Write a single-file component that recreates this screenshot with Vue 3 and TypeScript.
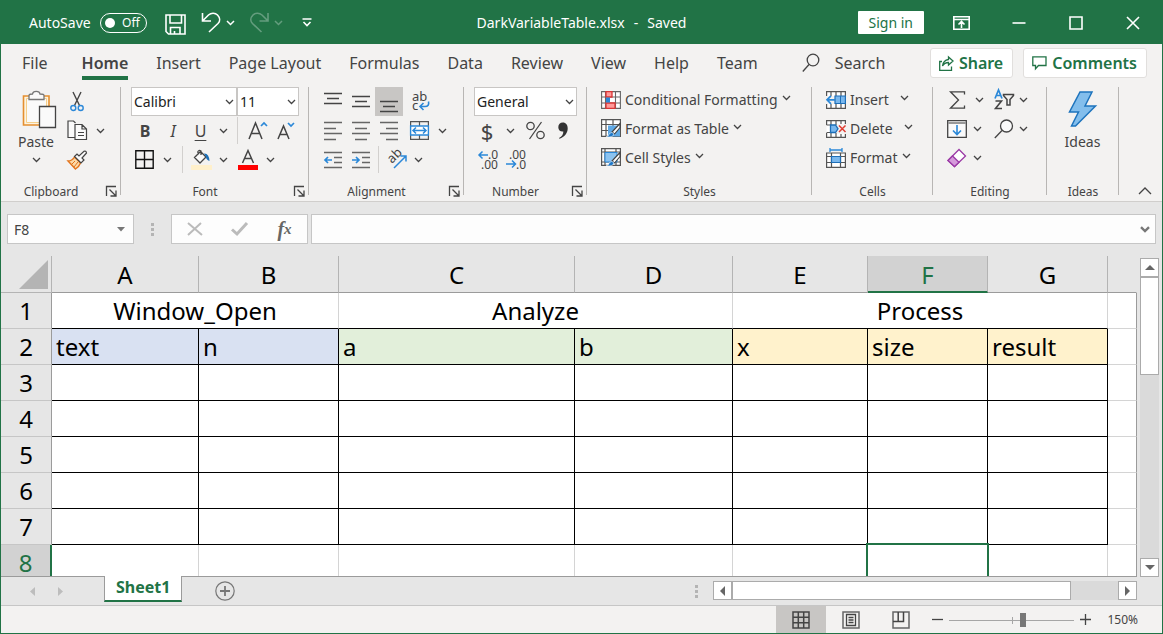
<script setup lang="ts">
import { h, ref } from 'vue'

interface Cell {
  text?: string
  span?: number
  tone?: 'blue' | 'green' | 'yellow'
}

const Chevron = () =>
  h('svg', { class: 'chevron', viewBox: '0 0 9 6', width: 9, height: 6, 'aria-hidden': 'true' }, [
    h('path', { d: 'M1 1l3.500 3.500L8 1' }),
  ])

const Launcher = () =>
  h('svg', { class: 'launcher-icon', viewBox: '0 0 11 11', width: 11, height: 11, 'aria-hidden': 'true' }, [
    h('path', { d: 'M.5 10V.5H10M3.500 3.500l6 6M10 4.500v5.500H4.500' }),
  ])

const menuTabs = ['File', 'Home', 'Insert', 'Page Layout', 'Formulas', 'Data', 'Review', 'View', 'Help', 'Team']
const activeTab = ref('Home')

const columns = [
  { name: 'A', width: 147 },
  { name: 'B', width: 140 },
  { name: 'C', width: 236 },
  { name: 'D', width: 158 },
  { name: 'E', width: 135 },
  { name: 'F', width: 120 },
  { name: 'G', width: 120 },
]

const groupHeads: Cell[] = [
  { text: 'Window_Open', span: 2 },
  { text: 'Analyze', span: 2 },
  { text: 'Process', span: 3 },
]

const fieldHeads: Cell[] = [
  { text: 'text', tone: 'blue' },
  { text: 'n', tone: 'blue' },
  { text: 'a', tone: 'green' },
  { text: 'b', tone: 'green' },
  { text: 'x', tone: 'yellow' },
  { text: 'size', tone: 'yellow' },
  { text: 'result', tone: 'yellow' },
]

const emptyRows = [3, 4, 5, 6, 7]
const autoSave = ref(false)
const cellName = ref('F8')
const formula = ref('')
const zoomPosition = ref(59)
</script>

<template>
  <div class="window">
    <header class="titlebar">
      <div class="quick">
        <label class="autosave">
          <span>AutoSave</span>
          <span class="switch">
            <input v-model="autoSave" type="checkbox" />
            <span class="switch-text">Off</span>
          </span>
        </label>
        <button class="q-save" aria-label="Save">
          <svg width="21" height="21" viewBox="0 0 21 21" class="line-white">
            <path d="M1 1H20V20H3.500L1 17.500zM5 1V9H16.500V1M5.500 20V13.500H15V20M9.500 20V17" />
          </svg>
        </button>
        <button class="q-undo" aria-label="Undo">
          <svg width="20" height="21" viewBox="0 0 20 21" class="line-white">
            <path d="M1.500 1V9H10M2 8.500L7.500 3C10 .8 14 .4 16.500 3S19.500 9 17 11.500L8 20" />
          </svg>
        </button>
        <button class="q-chev" aria-label="Undo list"><Chevron /></button>
        <button class="q-redo dim" aria-label="Redo">
          <svg width="20" height="21" viewBox="0 0 20 21" class="line-white">
            <path d="M18 1V9H9.500M17.500 8.500L12 3C9.500 .8 5.500 .4 3 3S0 9 2.500 11.500L11.500 20" />
          </svg>
        </button>
        <button class="q-chev dim" aria-label="Redo list"><Chevron /></button>
        <button class="q-more" aria-label="Customize toolbar">
          <svg width="10" height="9" viewBox="0 0 10 9" class="line-white"><path d="M.5 1H9.500M1.500 4L5 7.500L8.500 4" /></svg>
        </button>
      </div>
      <div class="doc-title"><span>DarkVariableTable.xlsx</span><span>-</span><span>Saved</span></div>
      <div class="window-tools">
        <button class="sign-in">Sign in</button>
        <button class="win-btn" aria-label="Ribbon display options">
          <svg width="17" height="14" viewBox="0 0 17 14" class="line-white">
            <path d="M.8 .8H16.200V13.200H.8zM.8 3.500H16.200M8.500 12V6M5.500 8.500L8.500 5.500L11.500 8.500" />
          </svg>
        </button>
        <button class="win-btn" aria-label="Minimize">
          <svg width="14" height="14" viewBox="0 0 14 14" class="line-white"><path d="M.5 7H13.500" /></svg>
        </button>
        <button class="win-btn" aria-label="Maximize">
          <svg width="14" height="14" viewBox="0 0 14 14" class="line-white"><path d="M1 1H13V13H1z" /></svg>
        </button>
        <button class="win-btn" aria-label="Close">
          <svg width="14" height="14" viewBox="0 0 14 14" class="line-white"><path d="M1 1L13 13M13 1L1 13" /></svg>
        </button>
      </div>
    </header>

    <nav class="menu">
      <button
        v-for="tab in menuTabs"
        :key="tab"
        class="menu-tab"
        :class="{ active: tab === activeTab, file: tab === 'File' }"
        @click="activeTab = tab"
      >{{ tab }}</button>
      <button class="search">
        <svg width="18" height="20" viewBox="0 0 18 20" class="line-dark"><circle cx="11" cy="7" r="5.800" /><path d="M7 11.500L.8 18.500" /></svg>
        <span>Search</span>
      </button>
      <div class="menu-actions">
        <button class="pill">
          <svg width="15" height="15" viewBox="0 0 15 15" class="line-green">
            <path d="M3 5.500H.7V14.300H12.500V10.500M9.500 1L14 5L9.500 9V6.500C6.500 6.500 5 7.500 3.500 10C4 6.500 6 4 9.500 3.500z" />
          </svg>
          <span>Share</span>
        </button>
        <button class="pill comments">
          <svg width="15" height="14" viewBox="0 0 15 14" class="line-green"><path d="M.8 .8H14V9.500H6.500L3.500 12.800V9.500H.8z" /></svg>
          <span>Comments</span>
        </button>
      </div>
    </nav>

    <section class="ribbon">
      <div class="group clipboard">
        <div class="group-body columns">
          <button class="big paste">
            <svg width="35" height="39" viewBox="0 0 35 39">
              <path d="M1.500 6H27V35H1.500z" fill="#fdf3df" stroke="#e58f2f" stroke-width="1.600" />
              <path d="M4.500 8.500H24.500V32.500H4.500z" fill="#fafafa" stroke="#f5cf8a" />
              <path d="M7 9.500V5.500C7 4 9 4 10.500 4C11 .5 17.500 .5 18 4C20 4 22 4 22 5.500V9.500z" fill="#fafafa" stroke="#777" stroke-width="1.300" />
              <path d="M17.500 16.500H33.500V37.500H17.500z" fill="#fafafa" stroke="#444" stroke-width="1.300" />
            </svg>
            <span>Paste</span>
            <Chevron />
          </button>
          <div class="stack">
            <div class="row">
              <button class="w28" aria-label="Cut">
                <svg width="14" height="21" viewBox="0 0 14 21" fill="none" stroke="#444" stroke-width="1.400">
                  <path d="M3 1L9.500 14.500M11 1L4.500 14.500" /><circle cx="3.300" cy="17" r="2.500" stroke="#2b88d8" /><circle cx="10.700" cy="17" r="2.500" stroke="#2b88d8" />
                </svg>
              </button>
            </div>
            <div class="row">
              <button class="w28" aria-label="Copy">
                <svg width="21" height="21" viewBox="0 0 21 21" fill="#fafafa" stroke="#444" stroke-width="1.200">
                  <path d="M8 17.500H1V1H6.500L8.500 3" /><path d="M8 4.500H15L19.500 9V19.500H8zM15 4.500V9H19.500M11 12.500H17M11 15.500H17" />
                </svg>
              </button>
              <button class="w18" aria-label="Copy options"><Chevron /></button>
            </div>
            <div class="row">
              <button class="w28" aria-label="Format Painter">
                <svg width="21" height="20" viewBox="0 0 21 20">
                  <path d="M1 11Q5 11 7.500 7L13.500 13Q12 17 8.500 19z" fill="#fbd9a8" stroke="#e3741c" stroke-width="1.400" />
                  <path d="M5 14L8 11M7 17L11 12" stroke="#e3741c" />
                  <path d="M7.500 6.500L10 4L12 6L17 1.200Q19 .5 19.500 3L15 8L17 10L14 13z" fill="#fafafa" stroke="#444" stroke-width="1.200" />
                </svg>
              </button>
            </div>
          </div>
        </div>
        <div class="group-foot"><span>Clipboard</span><button aria-label="Clipboard settings"><Launcher /></button></div>
      </div>

      <div class="group font">
        <div class="group-body">
          <div class="row">
            <span class="combo font-name">
              <select aria-label="Font"><option>Calibri</option></select><Chevron />
            </span>
            <span class="combo font-size">
              <select aria-label="Font size"><option>11</option></select><Chevron />
            </span>
          </div>
          <div class="row">
            <button class="w28 glyph bold">B</button>
            <button class="w28 glyph italic">I</button>
            <button class="w27 glyph underline">U</button>
            <button class="w18" aria-label="Underline options"><Chevron /></button>
            <i class="divider" />
            <button class="w30" aria-label="Increase font size">
              <svg width="20" height="20" viewBox="0 0 20 20" class="line-dark"><path d="M1 18L7.500 2L14 18M3.300 12.500H11.700" stroke-width="1.500" /><path d="M13 5L16 2L19 5" stroke="#2b88d8" stroke-width="1.700" /></svg>
            </button>
            <button class="w26" aria-label="Decrease font size">
              <svg width="18" height="20" viewBox="0 0 18 20" class="line-dark"><path d="M1 18L6.500 5L12 18M3 13.500H10" stroke-width="1.500" /><path d="M11 2L14 5L17 2" stroke="#2b88d8" stroke-width="1.700" /></svg>
            </button>
          </div>
          <div class="row">
            <button class="w26" aria-label="Borders">
              <svg width="19" height="19" viewBox="0 0 19 19" fill="none" stroke="#111" stroke-width="1.400"><path d="M.8 .8H18.200V18.200H.8zM9.500 1V18M1 9.500H18" /></svg>
            </button>
            <button class="w20" aria-label="Border options"><Chevron /></button>
            <i class="divider" />
            <button class="w26" aria-label="Fill color">
              <svg width="21" height="21" viewBox="0 0 21 21">
                <rect y="16" width="21" height="5" fill="#fff0cb" /><path d="M3.500 8.500L9.500 2.500L15 8L9 14zM7.500 5.500L6.800 3Q7.500 .5 10 2V6" fill="#fafafa" stroke="#444" stroke-width="1.300" /><path d="M13 4.500Q18 4 18.500 12Q15 10.500 15 8z" fill="#1a6fb8" />
              </svg>
            </button>
            <button class="w18" aria-label="Fill options"><Chevron /></button>
            <button class="w32" aria-label="Font color">
              <svg width="20" height="21" viewBox="0 0 20 21" class="line-dark"><path d="M4.500 14L10 1.500L15.500 14M6.500 9.500H13.500" stroke-width="1.500" /><rect y="16" width="20" height="5" fill="#f00" stroke="none" /></svg>
            </button>
            <button class="w12" aria-label="Font color options"><Chevron /></button>
          </div>
        </div>
        <div class="group-foot"><span>Font</span><button aria-label="Font settings"><Launcher /></button></div>
      </div>

      <div class="group alignment">
        <div class="group-body">
          <div class="row">
            <button class="w28" aria-label="Top align"><svg width="18" height="20" viewBox="0 0 18 20" class="line-dark"><path d="M0 1.500H18M3 6.500H15M0 11.500H18" /></svg></button>
            <button class="w28" aria-label="Middle align"><svg width="18" height="20" viewBox="0 0 18 20" class="line-dark"><path d="M0 4.500H18M3 9.500H15M0 14.500H18" /></svg></button>
            <button class="w28 pressed" aria-label="Bottom align"><svg width="18" height="20" viewBox="0 0 18 20" class="line-dark"><path d="M0 9.500H18M3 14.500H15M0 19.500H18" /></svg></button>
            <button class="w36" aria-label="Wrap text">
              <svg width="18" height="22" viewBox="0 0 18 22"><text x="0" y="10" class="icon-text">ab</text><text x="0" y="19" class="icon-text">c</text><path d="M16.500 10.500Q17.500 15.500 13 15.500H8M11.500 12L8 15.500L11.500 19" fill="none" stroke="#2b88d8" stroke-width="1.600" /></svg>
            </button>
          </div>
          <div class="row">
            <button class="w28" aria-label="Align left"><svg width="18" height="18" viewBox="0 0 18 18" class="line-mid"><path d="M0 .5H18M0 6.500H12M0 11.500H18M0 17.500H12" /></svg></button>
            <button class="w28" aria-label="Center"><svg width="18" height="18" viewBox="0 0 18 18" class="line-mid"><path d="M0 .5H18M3 6.500H15M0 11.500H18M3 17.500H15" /></svg></button>
            <button class="w28" aria-label="Align right"><svg width="18" height="18" viewBox="0 0 18 18" class="line-mid"><path d="M0 .5H18M6 6.500H18M0 11.500H18M6 17.500H18" /></svg></button>
            <button class="w32" aria-label="Merge and center">
              <svg width="19" height="19" viewBox="0 0 19 19" fill="none" stroke="#555" stroke-width="1.200"><path d="M.6 .6H18.400V18.400H.6zM9.500 .6V5M9.500 14V18.400" /><path d="M.6 5H18.400V14H.6z" fill="#fff" stroke="#2b88d8" stroke-width="1.400" /><path d="M3 9.500H16M6 6.500L3 9.500L6 12.500M13 6.500L16 9.500L13 12.500" stroke="#2b88d8" stroke-width="1.500" /></svg>
            </button>
            <button class="w14" aria-label="Merge options"><Chevron /></button>
          </div>
          <div class="row">
            <button class="w28" aria-label="Decrease indent"><svg width="18" height="18" viewBox="0 0 18 18" class="line-mid"><path d="M0 1.500H18M10 6.500H18M10 11.500H18M0 16.500H18" /><path d="M8 9H1M4 6L1 9L4 12" stroke="#2b88d8" stroke-width="1.700" /></svg></button>
            <button class="w28" aria-label="Increase indent"><svg width="18" height="18" viewBox="0 0 18 18" class="line-mid"><path d="M0 1.500H18M10 6.500H18M10 11.500H18M0 16.500H18" /><path d="M0 9H7M4 6L7 9L4 12" stroke="#2b88d8" stroke-width="1.700" /></svg></button>
            <i class="divider narrow" />
            <button class="w30" aria-label="Orientation">
              <svg width="22" height="21" viewBox="0 0 22 21"><text class="icon-text" transform="translate(6 15) rotate(-45)">ab</text><path d="M8 19L20 7M14.500 7H20V12.500" fill="none" stroke="#2b88d8" stroke-width="1.500" /></svg>
            </button>
            <button class="w12" aria-label="Orientation options"><Chevron /></button>
          </div>
        </div>
        <div class="group-foot"><span>Alignment</span><button aria-label="Alignment settings"><Launcher /></button></div>
      </div>

      <div class="group number">
        <div class="group-body">
          <div class="row">
            <span class="combo number-format">
              <select aria-label="Number format"><option>General</option></select><Chevron />
            </span>
          </div>
          <div class="row">
            <button class="w26 symbol">$</button>
            <button class="w20" aria-label="Currency options"><Chevron /></button>
            <button class="w30" aria-label="Percent style">
              <svg width="19" height="19" viewBox="0 0 19 19" class="line-dark"><circle cx="4.500" cy="5" r="3.700" /><circle cx="14.500" cy="14" r="3.700" /><path d="M15.500 1L3.500 18" /></svg>
            </button>
            <button class="w26" aria-label="Comma style">
              <svg width="10" height="17" viewBox="0 0 10 17"><path d="M1 16C4 14.500 5.500 12 5.300 9.500C2.500 10 .3 8 .3 5.200C.3 2.500 2.200 .6 4.800 .6C8 .6 9.700 3 9.700 6.500C9.700 11 6.500 15 1.500 16.700z" fill="#333" /></svg>
            </button>
          </div>
          <div class="row">
            <button class="w28" aria-label="Increase decimal">
              <svg width="20" height="21" viewBox="0 0 20 21"><text x="10" y="10" class="digit-text">.0</text><text x="3" y="20" class="digit-text">.00</text><path d="M10 6H1M4.500 2.500L1 6L4.500 9.500" fill="none" stroke="#2b88d8" stroke-width="1.500" /></svg>
            </button>
            <button class="w28" aria-label="Decrease decimal">
              <svg width="20" height="21" viewBox="0 0 20 21"><text x="3" y="10" class="digit-text">.00</text><text x="10" y="20" class="digit-text">.0</text><path d="M0 15H9.500M6 11.500L9.500 15L6 18.500" fill="none" stroke="#2b88d8" stroke-width="1.500" /></svg>
            </button>
          </div>
        </div>
        <div class="group-foot"><span>Number</span><button aria-label="Number settings"><Launcher /></button></div>
      </div>

      <div class="group styles">
        <div class="group-body raised">
          <button class="row labelled">
            <svg width="20" height="18" viewBox="0 0 20 18" fill="#fff" stroke="#666"><path d="M.6 .6H19.400V17.400H.6zM4.500 .6V17.400M14.500 .6V17.400M.6 6H19.400M.6 12H19.400" stroke-width="1.100" /><path d="M5 .6H11V6H5zM5 12H14V17.400H5z" fill="#ff9a9a" stroke="#d93636" stroke-width="1.300" /><path d="M5 6.500H9V11.500H5z" fill="#2b88d8" stroke="none" /></svg>
            <span>Conditional Formatting</span><Chevron />
          </button>
          <button class="row labelled">
            <svg width="20" height="19" viewBox="0 0 20 19"><path d="M.6 .6H19.400V17.400H.6zM5 .6V17.400M12 .6V17.400M.6 5.500H19.400M.6 11.500H19.400" fill="#fff" stroke="#555" stroke-width="1.200" /><path d="M7 6.500H19V17.500H7z" fill="#5ea9e6" /><path d="M11 13L19 4.500V8.500L13.500 15z" fill="#fff" stroke="#444" stroke-width="1.100" /><path d="M5 18Q8 17 8.500 14.500Q11 12 13 15Q12.500 18.500 5 18z" fill="#1e78c8" stroke="#fff" stroke-width=".6" /></svg>
            <span>Format as Table</span><Chevron />
          </button>
          <button class="row labelled">
            <svg width="20" height="19" viewBox="0 0 20 19"><path d="M.6 .6H19.400V17.400H.6zM4 .6V17.400M15 .6V17.400M.6 4H19.400M.6 14H19.400" fill="#fff" stroke="#555" stroke-width="1.200" /><path d="M4 4.500H16V14H4z" fill="#8cc3f0" stroke="#2b88d8" /><path d="M11 13L19 4.500V8.500L13.500 15z" fill="#fff" stroke="#444" stroke-width="1.100" /><path d="M5 18Q8 17 8.500 14.500Q11 12 13 15Q12.500 18.500 5 18z" fill="#1e78c8" stroke="#fff" stroke-width=".6" /></svg>
            <span>Cell Styles</span><Chevron />
          </button>
        </div>
        <div class="group-foot plain"><span>Styles</span></div>
      </div>

      <div class="group cells">
        <div class="group-body raised">
          <button class="row labelled wide">
            <svg width="20" height="18" viewBox="0 0 20 18"><path d="M.6 5V.6H19.400V5M.6 13V17.400H19.400V13M5 .6V5M10 .6V5M15 .6V5M5 13V17.400M10 13V17.400M15 13V17.400" fill="#fff" stroke="#555" stroke-width="1.200" /><path d="M9 5H19.400V12.500H9z" fill="#7ab8ee" stroke="#1e6fb8" stroke-width="1.200" /><path d="M14.500 5V12.500" stroke="#1e6fb8" /><path d="M9 8.800H1M5 4.800L1 8.800L5 12.800" fill="none" stroke="#2b88d8" stroke-width="1.700" /></svg>
            <span>Insert</span><Chevron />
          </button>
          <button class="row labelled wide">
            <svg width="20" height="18" viewBox="0 0 20 18"><path d="M.6 5V.6H19.400V4M.6 13V17.400H19.400V14M.6 5H5V12.500H.6M5 .6V5M10 .6V5M15 .6V4M5 13V17.400M10 13V17.400M15 14V17.400" fill="#fff" stroke="#555" stroke-width="1.200" /><path d="M4.500 5H9.500L12 8.800L9.500 12.500H4.500z" fill="#7ab8ee" stroke="#1e6fb8" stroke-width="1.300" /><path d="M13 5.500L19.500 12M19.500 5.500L13 12" stroke="#e03c31" stroke-width="1.500" /></svg>
            <span>Delete</span><Chevron />
          </button>
          <button class="row labelled">
            <svg width="20" height="20" viewBox="0 0 20 20"><path d="M.6 5H19.400V19.400H.6zM5.500 5V19.400M14.500 5V19.400M.6 8.500H19.400M.6 14.500H19.400" fill="#fff" stroke="#555" stroke-width="1.200" /><path d="M5.500 8.500H14.500V14.500H5.500z" fill="#7ab8ee" stroke="#1e6fb8" stroke-width="1.200" /><path d="M4 2H16M4 0V4M16 0V4" stroke="#2b88d8" stroke-width="1.300" /></svg>
            <span>Format</span><Chevron />
          </button>
        </div>
        <div class="group-foot plain"><span>Cells</span></div>
      </div>

      <div class="group editing">
        <div class="group-body raised">
          <div class="row">
            <button class="w28" aria-label="Sum"><svg width="17" height="18" viewBox="0 0 17 18" class="line-dark"><path d="M15.500 3.500V.8H1.500L9.500 9L1.500 17.200H15.500V14.500" /></svg></button>
            <button class="w16" aria-label="Sum options"><Chevron /></button>
            <button class="w24 spaced" aria-label="Sort and filter">
              <svg width="21" height="21" viewBox="0 0 21 21" class="line-dark"><path d="M1 9.500L4.500 1L8 9.500M2.300 6.500H6.700" stroke="#2b88d8" stroke-width="1.700" /><path d="M1.500 12H7.500L1.500 19.500H8" stroke-width="1.600" /><path d="M9.500 5.500H19.500V6.500L16 10.500V16H13V10.500L9.500 6.500z" stroke-width="1.500" /></svg>
            </button>
            <button class="w14" aria-label="Sort options"><Chevron /></button>
          </div>
          <div class="row">
            <button class="w28" aria-label="Fill"><svg width="20" height="18" viewBox="0 0 20 18"><path d="M.7 .7H19.300V17.300H.7z" fill="#fafafa" stroke="#444" stroke-width="1.300" /><path d="M1 3H19" stroke="#999" stroke-width="2" /><path d="M10 5V14.500M6 10.500L10 14.500L14 10.500" fill="none" stroke="#2b88d8" stroke-width="1.600" /></svg></button>
            <button class="w12" aria-label="Fill options"><Chevron /></button>
            <button class="w24 spaced far" aria-label="Find and select"><svg width="20" height="20" viewBox="0 0 20 20" class="line-dark"><circle cx="12.500" cy="7" r="6" fill="#fafafa" /><path d="M8 11.500L.8 19" /></svg></button>
            <button class="w14" aria-label="Find options"><Chevron /></button>
          </div>
          <div class="row">
            <button class="w28" aria-label="Clear"><svg width="20" height="20" viewBox="0 0 20 20" stroke="#9b3aa6" stroke-width="1.300"><path d="M1 12.500L12 1.500L18.500 8L7.500 18.500z" fill="#fff" /><path d="M1 12.500L5.500 8L12 14.200L7.500 18.500z" fill="#d59bdb" /></svg></button>
            <button class="w12" aria-label="Clear options"><Chevron /></button>
          </div>
        </div>
        <div class="group-foot plain"><span>Editing</span></div>
      </div>

      <div class="group ideas">
        <div class="group-body">
          <button class="big">
            <svg width="29" height="39" viewBox="0 0 29 39"><path d="M12 2H24L17 16H27.500L7.500 36H3.500L10.500 22H1.500z" fill="#83beec" stroke="#1e74bd" stroke-width="1.500" /></svg>
            <span>Ideas</span>
          </button>
        </div>
        <div class="group-foot plain"><span>Ideas</span></div>
      </div>
      <button class="collapse" aria-label="Collapse ribbon">
        <svg width="14" height="8" viewBox="0 0 14 8" class="line-dark"><path d="M1 7L7 1L13 7" /></svg>
      </button>
    </section>

    <section class="formula-bar">
      <div class="name-box">
        <input v-model="cellName" type="text" aria-label="Name box" />
        <button aria-label="Name list"><svg width="8" height="5" viewBox="0 0 8 5"><path d="M0 0H8L4 4.500z" fill="#777" /></svg></button>
      </div>
      <span class="grip" />
      <div class="entry-tools">
        <button aria-label="Cancel"><svg width="16" height="14" viewBox="0 0 16 14" fill="none" stroke="#bbb" stroke-width="2"><path d="M1 1L15 13M14 1L1 13" /></svg></button>
        <button aria-label="Enter"><svg width="17" height="14" viewBox="0 0 17 14" fill="none" stroke="#bbb" stroke-width="3"><path d="M1 7.500L6 12L16 1" /></svg></button>
        <button class="fx" aria-label="Insert function"><span>f</span><small>x</small></button>
      </div>
      <div class="formula-input">
        <input v-model="formula" type="text" aria-label="Formula" />
        <button aria-label="Expand formula bar"><svg width="10" height="7" viewBox="0 0 10 7" fill="none" stroke="#777" stroke-width="2.400"><path d="M1 1.200L5 5L9 1.200" /></svg></button>
      </div>
    </section>

    <main class="sheet-area">
      <div class="grid-clip">
        <table class="grid">
          <colgroup>
            <col class="col-head" />
            <col v-for="c in columns" :key="c.name" :style="{ width: c.width + 'px' }" />
            <col />
          </colgroup>
          <thead>
            <tr>
              <th class="corner"><svg width="29" height="29" viewBox="0 0 29 29"><path d="M29 0V29H0z" fill="#b4b4b4" /></svg></th>
              <th v-for="c in columns" :key="c.name" scope="col" :class="{ current: c.name === 'F' }">{{ c.name }}</th>
              <th class="rest" />
            </tr>
          </thead>
          <tbody>
            <tr>
              <th scope="row">1</th>
              <td v-for="g in groupHeads" :key="g.text" :colspan="g.span" class="group-head">{{ g.text }}</td>
              <td />
            </tr>
            <tr class="ruled">
              <th scope="row">2</th>
              <td v-for="f in fieldHeads" :key="f.text" :class="f.tone">{{ f.text }}</td>
              <td class="outside" />
            </tr>
            <tr v-for="r in emptyRows" :key="r" class="ruled">
              <th scope="row">{{ r }}</th>
              <td v-for="c in columns" :key="c.name" />
              <td class="outside" />
            </tr>
            <tr>
              <th scope="row" class="current">8</th>
              <td v-for="c in columns" :key="c.name" :class="{ selected: c.name === 'F' }" />
              <td />
            </tr>
          </tbody>
        </table>
      </div>
      <div class="v-scroll">
        <button aria-label="Scroll up"><svg width="10" height="5" viewBox="0 0 10 5"><path d="M0 5L5 0L10 5z" fill="#666" /></svg></button>
        <span class="v-thumb" />
        <button class="down" aria-label="Scroll down"><svg width="10" height="5" viewBox="0 0 10 5"><path d="M0 0H10L5 5z" fill="#666" /></svg></button>
      </div>
    </main>

    <section class="sheet-tabs">
      <div class="sheet-left">
        <button class="step" aria-label="Previous sheet"><svg width="5" height="9" viewBox="0 0 5 9"><path d="M5 0V9L0 4.500z" fill="#bdbdbd" /></svg></button>
        <button class="step" aria-label="Next sheet"><svg width="5" height="9" viewBox="0 0 5 9"><path d="M0 0V9L5 4.500z" fill="#bdbdbd" /></svg></button>
        <button class="sheet-tab">Sheet1</button>
        <button class="add" aria-label="New sheet"><svg width="20" height="20" viewBox="0 0 20 20" fill="none" stroke="#777"><circle cx="10" cy="10" r="9.200" stroke-width="1.200" /><path d="M10 5V15M5 10H15" stroke-width="1.800" /></svg></button>
      </div>
      <span class="grip tall" />
      <div class="h-scroll">
        <button aria-label="Scroll left"><svg width="5" height="10" viewBox="0 0 5 10"><path d="M5 0V10L0 5z" fill="#666" /></svg></button>
        <span class="h-thumb" />
        <button class="right" aria-label="Scroll right"><svg width="5" height="10" viewBox="0 0 5 10"><path d="M0 0V10L5 5z" fill="#666" /></svg></button>
      </div>
    </section>

    <footer class="status">
      <button class="view on" aria-label="Normal view"><svg width="18" height="18" viewBox="0 0 18 18" fill="none" stroke="#444" stroke-width="1.500"><path d="M1 1H17V17H1zM6.300 1V17M11.700 1V17M1 6.300H17M1 11.700H17" /></svg></button>
      <button class="view" aria-label="Page layout view"><svg width="18" height="18" viewBox="0 0 18 18" fill="none" stroke="#666" stroke-width="1.500"><path d="M1 1H17V17H1z" /><path d="M4.500 3.500H13.500V14.500H4.500zM6.500 6.500H11.500M6.500 9H11.500M6.500 11.500H11.500" stroke="#444" stroke-width="1.300" /></svg></button>
      <button class="view" aria-label="Page break view"><svg width="18" height="18" viewBox="0 0 18 18" fill="none" stroke="#666" stroke-width="1.500"><path d="M1 1H17V17H1z" /><path d="M1 10.500H11.500V1M6.200 1V10.500" stroke="#444" /></svg></button>
      <button class="zoom-step" aria-label="Zoom out"><svg width="11" height="11" viewBox="0 0 11 11" class="line-dark"><path d="M0 5.500H11" /></svg></button>
      <span class="zoom-track"><input v-model.number="zoomPosition" type="range" min="0" max="100" aria-label="Zoom" /></span>
      <button class="zoom-step" aria-label="Zoom in"><svg width="11" height="11" viewBox="0 0 11 11" class="line-dark"><path d="M0 5.500H11M5.500 0V11" /></svg></button>
      <button class="zoom-value">150%</button>
    </footer>
  </div>
</template>

<style>
html,
body {
  margin: 0;
  background: #e6e6e6;
}
</style>

<style scoped>
* {
  box-sizing: border-box;
}
.window {
  display: flex;
  flex-direction: column;
  height: 100vh;
  border: 1px solid #217346;
  overflow: hidden;
  background: #f3f2f1;
  color: #444;
  font: 14px/20px "Noto Sans", "Open Sans", sans-serif;
}
button,
input,
select {
  font: inherit;
  color: inherit;
}
button {
  display: inline-flex;
  align-items: center;
  justify-content: center;
  flex: none;
  padding: 0;
  border: 0;
  background: none;
}
svg {
  display: block;
  flex: none;
  overflow: visible;
}
.line-white,
.line-dark,
.line-mid,
.line-green,
.chevron,
.launcher-icon {
  fill: none;
  stroke: #444;
  stroke-width: 1.3;
}
.line-white {
  stroke: #fff;
  stroke-width: 1.6;
}
.line-mid {
  stroke: #666;
}
.line-green {
  stroke: #217346;
}

/* Title bar */
.titlebar {
  display: grid;
  grid-template-columns: 1fr auto 1fr;
  align-items: center;
  flex: none;
  height: 43px;
  background: #217346;
  color: #fff;
}
.quick {
  display: flex;
  align-items: center;
  padding-left: 28px;
}
.titlebar .chevron {
  stroke: #fff;
  stroke-width: 1.5;
}
.autosave {
  display: flex;
  align-items: center;
  gap: 9px;
}
.switch {
  position: relative;
  display: block;
  width: 47px;
  height: 20px;
}
.switch input {
  appearance: none;
  display: block;
  width: 47px;
  height: 20px;
  margin: 0;
  border: 1px solid #fff;
  border-radius: 10px;
}
.switch input::before {
  content: "";
  display: block;
  width: 10px;
  height: 10px;
  margin: 4px;
  border-radius: 5px;
  background: #fff;
}
.switch-text {
  position: absolute;
  top: 0;
  right: 7px;
  font-size: 12px;
}
.q-save {
  margin-left: 18px;
  padding-top: 3px;
}
.q-undo {
  width: 22px;
  margin-left: 14px;
}
.q-chev {
  width: 12px;
  margin-left: 3px;
}
.q-redo {
  margin-left: 13px;
}
.q-more {
  margin-left: 17px;
}
.dim {
  opacity: 0.3;
}
.doc-title {
  display: flex;
  gap: 9px;
}
.window-tools {
  display: flex;
  align-items: center;
  justify-content: flex-end;
  padding-right: 1px;
}
.sign-in {
  height: 23px;
  margin-right: 9px;
  padding: 0 11px;
  border-radius: 1px;
  background: #fff;
  color: #217346;
}
.win-btn {
  width: 57px;
  height: 43px;
}

/* Menu */
.menu {
  display: flex;
  align-items: flex-start;
  flex: none;
  gap: 28px;
  height: 43px;
  padding: 0 15px 0 21px;
  font-size: 16px;
}
.menu-tab {
  height: 36px;
  padding-top: 6px;
  border-bottom: 4px solid transparent;
}
.menu-tab.file {
  margin-right: 6px;
}
.menu-tab.active {
  border-color: #217346;
  font-weight: 600;
}
.search {
  gap: 15px;
  height: 38px;
  margin-left: 16px;
}
.menu-actions {
  display: flex;
  gap: 10px;
  margin-left: auto;
  padding-top: 4px;
}
.pill {
  gap: 5px;
  height: 30px;
  padding: 0 9px 0 8px;
  border: 1px solid #e1dfdd;
  border-radius: 3px;
  background: #fff;
  color: #217346;
  font-weight: 600;
}

/* Ribbon */
.ribbon {
  display: flex;
  flex: none;
  height: 115px;
  border-bottom: 1px solid #d0cecc;
}
.group {
  position: relative;
  display: flex;
  flex-direction: column;
  flex: none;
}
.group::after {
  content: "";
  position: absolute;
  top: 0;
  right: 0;
  bottom: 6px;
  width: 1px;
  background: #b8b6b4;
}
.clipboard { width: 120px; padding-left: 15px; }
.font { width: 188px; padding-left: 10px; }
.alignment { width: 155px; padding-left: 10px; }
.number { width: 123px; padding-left: 10px; }
.styles { width: 225px; padding-left: 14px; }
.cells { width: 121px; padding-left: 14px; }
.editing { width: 114px; padding-left: 10px; }
.ideas { width: 72px; }
.group-body {
  height: 87px;
}
.columns {
  display: flex;
  gap: 7px;
}
.row {
  display: flex;
  align-items: center;
  height: 29px;
}
.raised .row {
  padding-bottom: 4px;
}
.row > button {
  height: 29px;
}
.labelled {
  justify-content: flex-start;
  gap: 4px;
  width: 100%;
}
.labelled .chevron {
  margin-bottom: 3px;
}
.labelled.wide {
  gap: 11px;
}
.labelled.wide span {
  margin-left: -7px;
}
.w12 { width: 12px; }
.w14 { width: 14px; }
.w16 { width: 16px; }
.w18 { width: 18px; }
.w20 { width: 20px; }
.w24 { width: 24px; }
.w26 { width: 26px; }
.w27 { width: 27px; }
.w28 { width: 28px; }
.w30 { width: 30px; }
.w32 { width: 32px; }
.w36 { width: 36px; }
.spaced { margin-left: 5px; }
.spaced.far { margin-left: 9px; }
.pressed { background: #c8c6c4; }
.divider {
  width: 1px;
  height: 27px;
  margin: 0 5px;
  background: #d2d0ce;
}
.divider.narrow {
  margin: 0 3px;
}
.big {
  flex-direction: column;
  justify-content: flex-start;
  width: 40px;
  height: 87px;
  padding-top: 3px;
}
.big span {
  padding-top: 3px;
}
.big .chevron {
  margin-top: 5px;
}
.big.paste svg:first-child {
  margin-left: 7px;
}
.ideas .big {
  width: 71px;
}
.glyph {
  font-size: 16px;
}
.bold { font-weight: 700; }
.italic { font-style: italic; }
.underline { text-decoration: underline; text-underline-offset: 3px; }
.symbol {
  font-size: 22px;
}
.icon-text {
  fill: #444;
  font-size: 13px;
}
.digit-text {
  fill: #444;
  font-size: 12px;
}
.combo {
  position: relative;
  display: block;
  height: 29px;
}
.combo select {
  appearance: none;
  display: block;
  width: 100%;
  height: 29px;
  padding: 0 16px 0 2px;
  border: 1px solid #c8c6c4;
  border-radius: 0;
  background: #fff;
  color: #222;
}
.combo .chevron {
  position: absolute;
  top: 12px;
  right: 3px;
  pointer-events: none;
}
.font-name { width: 106px; }
.font-size { width: 62px; }
.number-format { width: 103px; }
.group-foot {
  display: flex;
  align-items: center;
  height: 20px;
  margin-top: 7px;
  font-size: 12px;
}
.group-foot span {
  padding-top: 1px;
}
.font .group-foot,
.alignment .group-foot,
.number .group-foot {
  margin-left: -10px;
}
.clipboard .group-foot {
  margin-left: -15px;
}
.styles .group-foot,
.cells .group-foot {
  margin-left: -14px;
}
.editing .group-foot {
  margin-left: -10px;
}
.group-foot span {
  flex: 1;
  text-align: center;
}
.group-foot button {
  width: 20px;
  height: 20px;
}
.collapse {
  align-self: flex-end;
  width: 28px;
  height: 20px;
  margin-left: auto;
  margin-right: 3px;
}

/* Formula bar */
.formula-bar {
  display: flex;
  align-items: center;
  flex: none;
  height: 54px;
  padding: 0 6px;
  background: #e6e6e6;
}
.name-box,
.entry-tools,
.formula-input {
  display: flex;
  align-items: center;
  height: 30px;
  border: 1px solid #c6c6c6;
  background: #fdfdfd;
}
.name-box {
  width: 127px;
}
.name-box input,
.formula-input input {
  flex: 1;
  min-width: 0;
  height: 28px;
  padding: 0 6px;
  border: 0;
  background: none;
  font-size: 14px;
}
.name-box button {
  width: 24px;
  height: 28px;
}
.grip {
  flex: none;
  width: 3px;
  height: 13px;
  margin: 0 17px;
  background: repeating-linear-gradient(#b4b4b4 0 3px, transparent 3px 5px);
}
.entry-tools {
  width: 137px;
}
.entry-tools button {
  flex: 1;
  height: 28px;
}
.entry-tools .fx {
  color: #666;
  font: italic 700 20px/24px "Liberation Serif", serif;
}
.fx small {
  font-size: 15px;
}
.formula-input {
  flex: 1;
  margin-left: 3px;
}
.formula-input button {
  width: 20px;
  height: 28px;
}

/* Sheet */
.sheet-area {
  display: flex;
  flex: 1;
  min-height: 0;
  background: #e6e6e6;
}
.grid-clip {
  flex: 1;
  min-width: 0;
  overflow: hidden;
  border-bottom: 1px solid #9b9b9b;
}
.grid {
  width: 100%;
  border-spacing: 0;
  border-collapse: separate;
  table-layout: fixed;
  color: #000;
  font-size: 24px;
  line-height: 30px;
}
.col-head {
  width: 51px;
}
.grid tr {
  height: 36px;
}
.grid th,
.grid td {
  height: 36px;
  padding: 0 4px;
  border-right: 1px solid #d4d4d4;
  border-bottom: 1px solid #d4d4d4;
  font-weight: 400;
  line-height: 30px;
}
.grid thead tr,
.grid thead th {
  height: 37px;
}
.grid thead th {
  padding-top: 2px;
  border-right-color: #b4b4b4;
  border-bottom-color: #9b9b9b;
}
.grid thead th.rest {
  border-right-color: transparent;
}
.grid thead th.current {
  border-bottom: 2px solid #217346;
  padding-top: 3px;
}
.grid thead .corner {
  padding: 0 3px 3px 0;
  border-bottom-color: #b4b4b4;
  vertical-align: bottom;
}
.corner svg {
  margin-left: auto;
}
.grid tbody th {
  border-right-color: #9b9b9b;
  border-bottom-color: #c6c6c6;
  background: #e6e6e6;
}
.grid .current,
.grid tbody th.current {
  background: #d2d2d2;
  color: #217346;
}
.grid tbody th.current {
  border-right: 2px solid #217346;
}
.grid td {
  background: #fff;
}
.grid td:last-child {
  border-right-color: #9b9b9b;
}
.grid .group-head {
  border-bottom-color: #000;
  text-align: center;
}
.grid .ruled td {
  border-right-color: #000;
  border-bottom-color: #000;
}
.grid .ruled td.outside {
  border-right-color: #9b9b9b;
  border-bottom-color: #d4d4d4;
}
.grid td.blue { background: #d9e1f2; }
.grid td.green { background: #e2efda; }
.grid td.yellow { background: #fff2cc; }
.selected {
  position: relative;
}
.selected::after {
  content: "";
  position: absolute;
  inset: -2px -2px 0 -2px;
  border: 2px solid #217346;
  border-bottom: 0;
}
.v-scroll {
  display: flex;
  flex-direction: column;
  flex: none;
  width: 19px;
  margin: 2px 3px 0;
  background: #dadada;
}
.v-scroll button,
.h-scroll button {
  width: 19px;
  height: 19px;
  border: 1px solid #ababab;
  background: #fff;
}
.v-thumb {
  height: 98px;
  border: 1px solid #ababab;
  background: #fff;
}
.v-scroll .down {
  margin-top: auto;
}

/* Sheet tabs */
.sheet-tabs {
  display: flex;
  align-items: flex-start;
  flex: none;
  height: 29px;
  padding-right: 25px;
  border-bottom: 1px solid #c6c6c6;
  background: #e6e6e6;
}
.sheet-left {
  display: flex;
  flex: 1;
}
.step {
  width: 28px;
  height: 28px;
}
.step:first-child {
  margin-left: 17px;
}
.sheet-tab {
  position: relative;
  height: 26px;
  margin: -1px 0 0 30px;
  padding: 0 11px 2px;
  border: 1px solid #9b9b9b;
  border-width: 0 1px 2px;
  border-bottom-color: #217346;
  background: #fff;
  color: #217346;
  font-size: 16px;
  font-weight: 700;
}
.add {
  height: 28px;
  margin-left: 33px;
}
.grip.tall {
  margin: 8px 15px 0;
}
.h-scroll {
  display: flex;
  flex: 0 0 37.3%;
  height: 19px;
  margin-top: 4px;
  background: #dadada;
}
.h-thumb {
  width: 80%;
  height: 19px;
  border: 1px solid #ababab;
  background: #fff;
}
.h-scroll .right {
  margin-left: auto;
}

/* Status bar */
.status {
  display: flex;
  align-items: center;
  justify-content: flex-end;
  flex: none;
  height: 27px;
  padding-right: 24px;
  font-size: 12px;
}
.view {
  width: 50px;
  height: 27px;
}
.view.on {
  background: #c8c6c4;
}
.zoom-step {
  width: 23px;
  height: 27px;
}
.zoom-track {
  position: relative;
  display: block;
  width: 125px;
  height: 14px;
  background: linear-gradient(#a6a6a6, #a6a6a6) 0 7px / 100% 1px no-repeat;
}
.zoom-track::before {
  content: "";
  position: absolute;
  top: 4px;
  left: 50%;
  width: 1px;
  height: 7px;
  background: #a6a6a6;
}
.zoom-track input {
  position: relative;
  appearance: none;
  display: block;
  width: 100%;
  height: 14px;
  margin: 0;
  background: none;
}
.zoom-track input::-webkit-slider-thumb {
  appearance: none;
  width: 6px;
  height: 14px;
  border-radius: 0;
  background: #777;
}
.zoom-value {
  margin-left: 10px;
}
</style>
